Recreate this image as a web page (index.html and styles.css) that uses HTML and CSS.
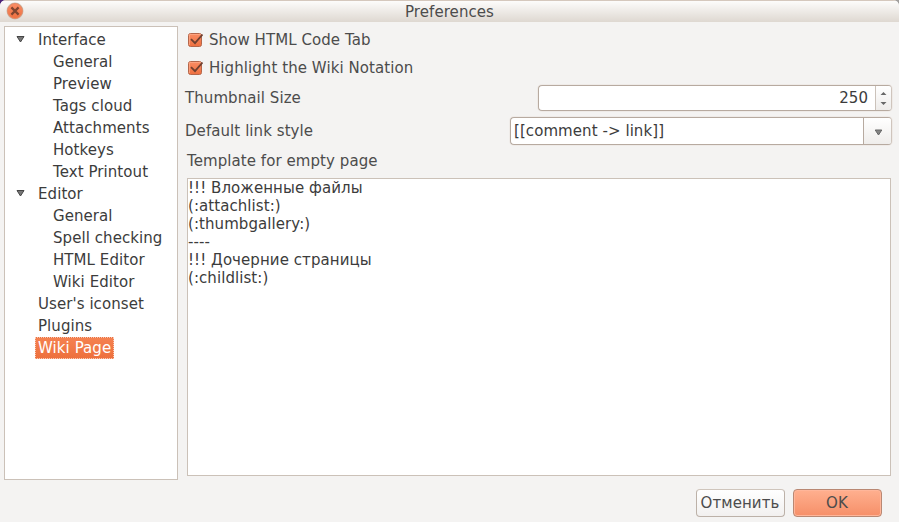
FILE: index.html
```html
<!DOCTYPE html>
<html lang="en">
<head>
<meta charset="utf-8">
<title>Preferences</title>
<link rel="stylesheet" href="styles.css">
</head>
<body>
<div class="window">
  <header class="titlebar">
    <svg class="close" width="18" height="18" viewBox="0 0 18 18">
      <defs><linearGradient id="orange" x1="0" y1="0" x2="0" y2="1"><stop offset="0" stop-color="#fa8d65"/><stop offset="1" stop-color="#ee7040"/></linearGradient></defs>
      <circle cx="9" cy="9" r="8.5" fill="#c9bcae"/>
      <circle cx="9" cy="9" r="7.5" fill="url(#orange)" stroke="#e58a66"/>
      <path d="M5.4 5.4l7.2 7.2M12.6 5.4l-7.2 7.2" stroke="#81452f" stroke-width="2.2"/>
    </svg>
    <h1>Preferences</h1>
  </header>
  <main class="content">
    <ul class="tree">
      <li class="branch"><svg class="expander" width="9" height="8" viewBox="0 0 9 8"><path d="M1 1.5h7L4.5 7z" fill="#777" stroke="#444"/></svg><span>Interface</span></li>
      <li class="leaf"><span>General</span></li>
      <li class="leaf"><span>Preview</span></li>
      <li class="leaf"><span>Tags cloud</span></li>
      <li class="leaf"><span>Attachments</span></li>
      <li class="leaf"><span>Hotkeys</span></li>
      <li class="leaf"><span>Text Printout</span></li>
      <li class="branch"><svg class="expander" width="9" height="8" viewBox="0 0 9 8"><path d="M1 1.5h7L4.5 7z" fill="#777" stroke="#444"/></svg><span>Editor</span></li>
      <li class="leaf"><span>General</span></li>
      <li class="leaf"><span>Spell checking</span></li>
      <li class="leaf"><span>HTML Editor</span></li>
      <li class="leaf"><span>Wiki Editor</span></li>
      <li><span>User's iconset</span></li>
      <li><span>Plugins</span></li>
      <li><span class="selected">Wiki Page</span></li>
    </ul>
    <section class="panel">
      <div class="check"><svg width="17" height="16" viewBox="0 0 17 16"><rect x="1.5" y="1.5" width="13" height="13" rx="2" fill="url(#orange)" stroke="#b4664b"/><path d="M2.5 13V2.5H14" fill="none" stroke="#ffac8c" stroke-opacity=".7"/><path d="M4 7.2l4 4L15.5 2.5" fill="none" stroke="#704030" stroke-width="1.9"/></svg><span>Show HTML Code Tab</span></div>
      <div class="check"><svg width="17" height="16" viewBox="0 0 17 16"><rect x="1.5" y="1.5" width="13" height="13" rx="2" fill="url(#orange)" stroke="#b4664b"/><path d="M2.5 13V2.5H14" fill="none" stroke="#ffac8c" stroke-opacity=".7"/><path d="M4 7.2l4 4L15.5 2.5" fill="none" stroke="#704030" stroke-width="1.9"/></svg><span>Highlight the Wiki Notation</span></div>
      <div class="row size"><span>Thumbnail Size</span>
        <div class="field spin"><span class="value">250</span><div class="stepper"><svg width="15" height="24" viewBox="0 0 15 24"><path d="M4.5 9h6L7.5 6zM4.5 16h6l-3 3z" fill="#686868"/></svg></div></div>
      </div>
      <div class="row style"><span>Default link style</span>
        <div class="field combo"><span class="value">[[comment -&gt; link]]</span><div class="drop"><svg width="9" height="7" viewBox="0 0 9 7"><path d="M1.2 1h6.6L4.5 6z" fill="#858585" stroke="#666"/></svg></div></div>
      </div>
      <div class="label">Template for empty page</div>
      <div class="editor">!!! Вложенные файлы
(:attachlist:)
(:thumbgallery:)
----
!!! Дочерние страницы
(:childlist:)</div>
    </section>
  </main>
  <footer class="actions">
    <button class="button">Отменить</button>
    <button class="button primary">OK</button>
  </footer>
</div>
</body>
</html>
```
FILE: styles.css
```css
* { box-sizing: border-box; }
body {
  margin: 0;
  background: linear-gradient(90deg, #4b2378 50%, #a09e9c 50%);
  font: 15px/18px "DejaVu Sans", sans-serif;
  letter-spacing: 0.07px;
  color: #4c4c4c;
}
svg { display: block; flex: none; }
.window {
  height: 522px;
  display: flex;
  flex-direction: column;
  background: #f4f3f2;
  border-radius: 6px 6px 0 0;
  overflow: hidden;
}
.titlebar {
  height: 22px;
  display: flex;
  align-items: center;
  padding: 0 24px 0 6px;
  border-top: 1px solid #d5c8bd;
  background: linear-gradient(#fdfcfb, #ded8d1);
}
.close { margin-top: -1px; }
.titlebar h1 {
  flex: 1;
  margin: 0;
  font-size: 15px;
  font-weight: normal;
  text-align: center;
}
.content { height: 458px; display: flex; padding: 4px 7px 0 4px; }
.tree {
  width: 174px;
  height: 454px;
  margin: 0;
  padding: 2px 0 0;
  list-style: none;
  background: #fff;
  border: 1px solid #cbc1b8;
  color: #3c3c3c;
}
.tree li { height: 22px; display: flex; align-items: center; padding-left: 30px; }
.tree li span { height: 22px; line-height: 23px; padding: 0 3px; white-space: nowrap; }
.tree .branch { padding-left: 11px; }
.tree .leaf { padding-left: 45px; }
.tree .expander { margin: -2px 10px 0 0; }
.tree li .selected {
  line-height: 21px;
  padding: 0 1.4px 0 2px;
  border: 1px dotted #f8c9b5;
  background: linear-gradient(#f58150, #ed703d);
  color: #fff;
}
.panel { flex: 1; padding-left: 7px; }
.check { height: 28px; display: flex; align-items: center; gap: 5px; padding: 0 0 0 2px; }
.check svg { margin-top: -1px; }
.row { display: flex; align-items: center; justify-content: space-between; }
.size { height: 26px; margin-top: 3px; }
.style { height: 28px; margin-top: 6px; }
.field {
  display: flex;
  height: 100%;
  background: #fff;
  border: 1px solid #b7aaa0;
  border-right-color: #cfc5bd;
  border-radius: 4px;
  color: #3c3c3c;
  overflow: hidden;
  box-shadow: 0 0 0 1px #efebe8;
}
.field .value { flex: 1; }
.spin { width: 354px; }
.spin .value { text-align: right; padding: 3px 7px 0 0; }
.stepper { width: 16px; border-left: 1px solid #cbc2ba; background: linear-gradient(#fff, #eeecea); }
.combo { width: 382px; }
.combo .value { padding: 4px 0 0 3px; }
.drop {
  width: 28px;
  display: flex;
  align-items: center;
  justify-content: center;
  padding: 3px 0 0 2px;
  border-left: 1px solid #b7aaa0;
  background: linear-gradient(#fff, #efedeb);
}
.label { margin: 7px 0 0 2px; height: 26px; }
.editor {
  width: 704px;
  height: 298px;
  margin-left: 2px;
  background: #fff;
  border: 1px solid #cbc1b8;
  white-space: pre;
  color: #3c3c3c;
}
.actions { display: flex; justify-content: flex-end; gap: 8px; padding: 9px 17px 0 0; }
.button {
  width: 89px;
  height: 28px;
  padding: 0 1px 0 0;
  border: 1px solid #bcb1a8;
  border-top-color: #cfc5bc;
  border-radius: 4px;
  background: linear-gradient(#fff, #f2f0ef);
  color: #4c4c4c;
  font: inherit;
  letter-spacing: inherit;
  white-space: nowrap;
}
.primary {
  border-color: #b98873;
  background: linear-gradient(#ffb08f, #f68f68);
  box-shadow: inset 0 0 0 1px #ffb69a;
}
```
